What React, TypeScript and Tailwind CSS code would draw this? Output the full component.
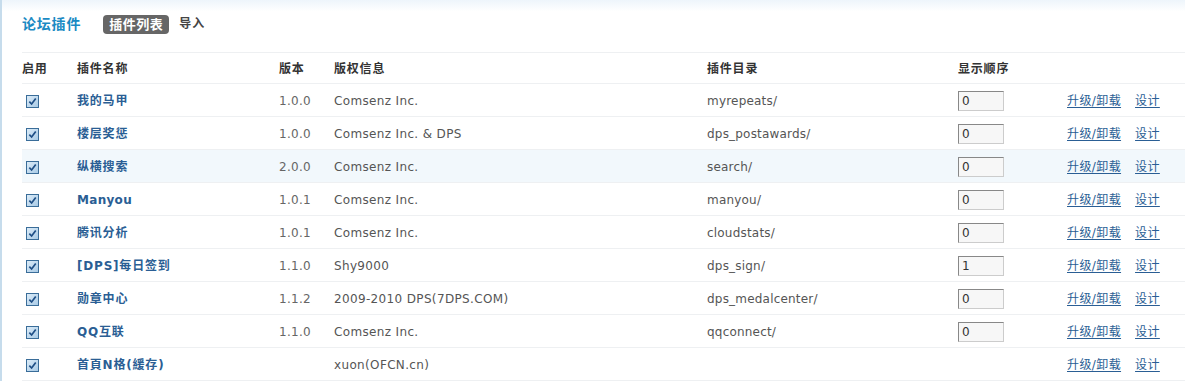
import React from "react";

type Plugin = {
  name: string;
  version: string;
  copyright: string;
  dir: string;
  order?: string;
  hover?: boolean;
};

const plugins: Plugin[] = [
  { name: "我的马甲", version: "1.0.0", copyright: "Comsenz Inc.", dir: "myrepeats/", order: "0" },
  { name: "楼层奖惩", version: "1.0.0", copyright: "Comsenz Inc. & DPS", dir: "dps_postawards/", order: "0" },
  { name: "纵横搜索", version: "2.0.0", copyright: "Comsenz Inc.", dir: "search/", order: "0", hover: true },
  { name: "Manyou", version: "1.0.1", copyright: "Comsenz Inc.", dir: "manyou/", order: "0" },
  { name: "腾讯分析", version: "1.0.1", copyright: "Comsenz Inc.", dir: "cloudstats/", order: "0" },
  { name: "[DPS]每日签到", version: "1.1.0", copyright: "Shy9000", dir: "dps_sign/", order: "1" },
  { name: "勋章中心", version: "1.1.2", copyright: "2009-2010 DPS(7DPS.COM)", dir: "dps_medalcenter/", order: "0" },
  { name: "QQ互联", version: "1.1.0", copyright: "Comsenz Inc.", dir: "qqconnect/", order: "0" },
  { name: "首頁N格(緩存)", version: "", copyright: "xuon(OFCN.cn)", dir: "" },
];

const FONT = "font-['DejaVu_Sans','Noto_Sans_CJK_SC',sans-serif]";

function Check() {
  return (
    <span className="inline-flex size-[13px] items-center justify-center border border-[#3a6d99] bg-gradient-to-br from-[#dcecf8] to-[#a9cbe6] align-middle">
      <svg viewBox="0 0 10 10" className="size-[9px]" aria-hidden>
        <path d="M1.5 5.2 L4 7.8 L8.6 1.6" fill="none" stroke="#1f4f86" strokeWidth="1.9" />
      </svg>
    </span>
  );
}

export default function App() {
  return (
    <div className={`h-[381px] w-[1185px] overflow-hidden border-l-2 border-[#c6dcec] bg-gradient-to-b from-[#eef5fb] via-white via-[3%] to-white text-[12px] ${FONT}`}>
      <div className="flex h-[52px] items-center pl-[20px] pb-[4px]">
        <h1 className="text-[14px] font-bold tracking-[0.8px] text-[#1a8ac3]">论坛插件</h1>
        <span className="ml-[22px] rounded-[4px] bg-[#666] px-[6px] py-[2px] text-[13px] font-bold leading-[15px] tracking-[0.5px] text-white">
          插件列表
        </span>
        <span className="ml-[10px] text-[12px] font-bold tracking-[1px] text-[#444]">导入</span>
      </div>

      <table className="ml-[20px] w-[1163px] table-fixed border-collapse">
        <colgroup>
          <col className="w-[55px]" />
          <col className="w-[202px]" />
          <col className="w-[55px]" />
          <col className="w-[373px]" />
          <col className="w-[251px]" />
          <col className="w-[109px]" />
          <col />
        </colgroup>
        <thead>
          <tr className="h-[31px] border-y border-[#eef0f2] text-left font-bold tracking-[0.8px] text-[#333]">
            <th className="pt-[1px] font-bold">启用</th>
            <th className="pt-[1px] font-bold">插件名称</th>
            <th className="pt-[1px] font-bold">版本</th>
            <th className="pt-[1px] font-bold">版权信息</th>
            <th className="pt-[1px] font-bold">插件目录</th>
            <th className="pt-[1px] font-bold">显示顺序</th>
            <th />
          </tr>
        </thead>
        <tbody>
          {plugins.map((p) => (
            <tr
              key={p.name}
              className={`h-[33px] border-b border-[#eef0f2] text-[#555] ${p.hover ? "bg-[#f2f8fc]" : ""}`}
            >
              <td className="pl-[4px] pt-[1px]">
                <Check />
              </td>
              <td
                className={`pt-[1px] font-bold text-[#2a5e94] ${
                  p.name === "Manyou" ? "tracking-[0.3px]" : "tracking-[0.8px]"
                }`}
              >
                {p.name}
              </td>
              <td className="pt-[1px] tracking-[0.3px] text-[#666]">{p.version}</td>
              <td className="pt-[1px] tracking-[0.35px]">{p.copyright}</td>
              <td className="pt-[1px] tracking-[0.2px]">{p.dir}</td>
              <td className="pt-[1px]">
                {p.order !== undefined && (
                  <input
                    readOnly
                    value={p.order}
                    className="block h-[20px] w-[46px] border border-t-[#888] border-l-[#888] border-b-[#ccc] border-r-[#ccc] bg-[#f7f7f7] px-[3px] text-[12px] text-[#333]"
                  />
                )}
              </td>
              <td className="whitespace-nowrap pt-[1px] tracking-[0.4px]">
                <a href="#" className="text-[#2a5e94] underline underline-offset-2">升级/卸载</a>
                <a href="#" className="ml-[14px] text-[#2a5e94] underline underline-offset-2">设计</a>
              </td>
            </tr>
          ))}
        </tbody>
      </table>
    </div>
  );
}
